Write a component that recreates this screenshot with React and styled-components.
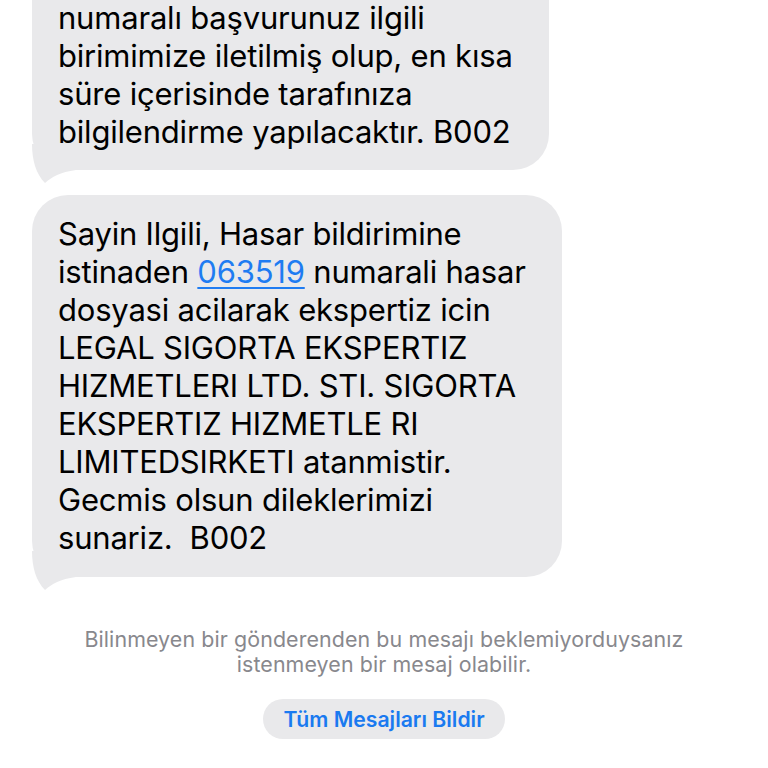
import React from "react";
import styled, { createGlobalStyle } from "styled-components";

const GlobalStyle = createGlobalStyle`
  html, body {
    margin: 0;
    padding: 0;
    background: #fff;
  }
  body {
    font-family: Inter, "Noto Sans", "Liberation Sans", sans-serif;
    -webkit-font-smoothing: antialiased;
  }
`;

const Screen = styled.div`
  width: 768px;
  height: 768px;
  overflow: hidden;
  display: flex;
  flex-direction: column;
  align-items: stretch;
`;

const Thread = styled.div`
  display: flex;
  flex-direction: column;
  align-items: flex-start;
  gap: 25px;
  padding: 0 32px;
`;

const Bubble = styled.div`
  position: relative;
  background: #e9e9eb;
  color: #000;
  font-size: 31px;
  line-height: 38px;
  letter-spacing: -0.2px;
  padding: ${(p) => (p.$clipped ? "0 36px 19px 26px" : "20px 36px 20px 26px")};
  border-radius: ${(p) => (p.$clipped ? "0 0 36px 36px" : "36px")};
  margin-top: ${(p) => (p.$clipped ? "-1px" : "0")};
`;

const Line = styled.span`
  display: block;
  white-space: pre;
`;

const Link = styled.span`
  color: #1f7cf2;
  text-decoration: underline;
  text-decoration-thickness: 2px;
  text-underline-offset: 4px;
`;

const TailSvg = styled.svg`
  position: absolute;
  left: 0;
  bottom: -14px;
  display: block;
`;

const Tail = () => (
  <TailSvg width="44" height="40" viewBox="0 0 44 40">
    <path
      d="M0 0 C0 16 4 30 13 39 C20 33 28 28 44 26 L44 0 Z"
      fill="#e9e9eb"
    />
  </TailSvg>
);

const Notice = styled.p`
  margin: 50px 0 0;
  text-align: center;
  color: #88888d;
  font-size: 21.4px;
  line-height: 25px;
  letter-spacing: 0.1px;
`;

const ButtonRow = styled.div`
  display: flex;
  justify-content: center;
  margin-top: 22px;
`;

const ReportButton = styled.button`
  border: 0;
  background: #e9e9eb;
  color: #1a7af0;
  font-family: inherit;
  font-size: 21.2px;
  font-weight: 600;
  height: 40px;
  padding: 0 20px;
  border-radius: 20px;
`;

export default function App() {
  return (
    <>
      <GlobalStyle />
      <Screen>
        <Thread>
          <Bubble $clipped>
            <Line>numaralı başvurunuz ilgili</Line>
            <Line>birimimize iletilmiş olup, en kısa</Line>
            <Line>süre içerisinde tarafınıza</Line>
            <Line>bilgilendirme yapılacaktır. B002</Line>
            <Tail />
          </Bubble>
          <Bubble>
            <Line>Sayin Ilgili, Hasar bildirimine</Line>
            <Line>
              istinaden <Link>063519</Link> numarali hasar
            </Line>
            <Line>dosyasi acilarak ekspertiz icin</Line>
            <Line>LEGAL SIGORTA EKSPERTIZ</Line>
            <Line>HIZMETLERI LTD. STI. SIGORTA</Line>
            <Line>EKSPERTIZ HIZMETLE RI</Line>
            <Line>LIMITEDSIRKETI atanmistir.</Line>
            <Line>Gecmis olsun dileklerimizi</Line>
            <Line>sunariz.  B002</Line>
            <Tail />
          </Bubble>
        </Thread>
        <Notice>
          Bilinmeyen bir gönderenden bu mesajı beklemiyorduysanız
          <br />
          istenmeyen bir mesaj olabilir.
        </Notice>
        <ButtonRow>
          <ReportButton>Tüm Mesajları Bildir</ReportButton>
        </ButtonRow>
      </Screen>
    </>
  );
}
